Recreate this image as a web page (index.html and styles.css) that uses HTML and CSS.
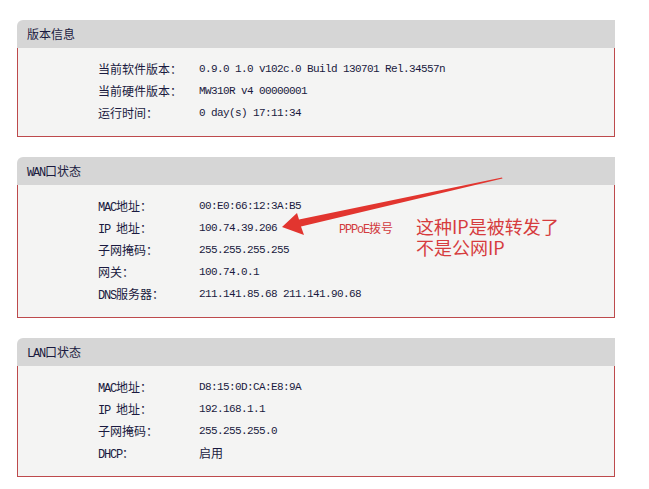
FILE: index.html
```html
<!DOCTYPE html>
<html lang="zh-CN">
<head>
    <meta charset="UTF-8">
    <title>运行状态</title>
    <link rel="stylesheet" href="styles.css">
</head>
<body>
    <div class="page">
        <div class="panel">
            <div class="panel-head">版本信息</div>
            <div class="panel-body">
                <div class="row"><span class="label">当前软件版本：</span><span class="val">0.9.0 1.0 v102c.0 Build 130701 Rel.34557n</span></div>
                <div class="row"><span class="label">当前硬件版本：</span><span class="val">MW310R v4 00000001</span></div>
                <div class="row"><span class="label">运行时间：</span><span class="val">0 day(s) 17:11:34</span></div>
            </div>
        </div>

        <div class="panel">
            <div class="panel-head"><span class="en">WAN</span>口状态</div>
            <div class="panel-body">
                <div class="row"><span class="label"><span class="en">MAC</span>地址：</span><span class="val">00:E0:66:12:3A:B5</span></div>
                <div class="row"><span class="label"><span class="en">IP </span> 地址：</span><span class="val">100.74.39.206</span></div>
                <div class="row"><span class="label">子网掩码：</span><span class="val">255.255.255.255</span></div>
                <div class="row"><span class="label">网关：</span><span class="val">100.74.0.1</span></div>
                <div class="row"><span class="label"><span class="en">DNS</span>服务器：</span><span class="val">211.141.85.68 211.141.90.68</span></div>
                <div class="tag"><span class="en">PPPoE</span>拨号</div>
                <div class="note">
                    <div>这种IP是被转发了</div>
                    <div>不是公网IP</div>
                </div>
            </div>
        </div>

        <div class="panel">
            <div class="panel-head"><span class="en">LAN</span>口状态</div>
            <div class="panel-body">
                <div class="row"><span class="label"><span class="en">MAC</span>地址：</span><span class="val">D8:15:0D:CA:E8:9A</span></div>
                <div class="row"><span class="label"><span class="en">IP </span> 地址：</span><span class="val">192.168.1.1</span></div>
                <div class="row"><span class="label">子网掩码：</span><span class="val">255.255.255.0</span></div>
                <div class="row"><span class="label"><span class="en">DHCP</span>：</span><span class="val cn">启用</span></div>
            </div>
        </div>

        <!-- annotation arrow drawn on top of the screenshot -->
        <svg class="arrow" width="649" height="489" viewBox="0 0 649 489">
            <polygon fill="#e2352f" points="282,227 297,213 299,219.6 502,177.6 502.5,178.4 301,226.6 304,235"/>
        </svg>
    </div>
</body>
</html>
```

FILE: styles.css
```css
body {
    margin: 0;
    background: #ffffff;
    font-family: "Noto Sans CJK SC", sans-serif;
    font-size: 12px;
    color: #1a1a40;
}

.page {
    position: relative;
    width: 598px;
    padding: 20px 0 0 17px;
    display: flex;
    flex-direction: column;
    gap: 20px;
}

.panel-head {
    height: 28px;
    line-height: 28px;
    padding-left: 10px;
    background: #d6d6d6;
    border-top-left-radius: 6px;
}

.panel-body {
    position: relative;
    background: #f4f4f3;
    border: 1px solid #bd4a4c;
    border-top: none;
    padding: 10px 0 12px 80px;
}

.row {
    display: grid;
    grid-template-columns: 101px auto;
    height: 22px;
    line-height: 22px;
}

.val {
    font-family: "Liberation Mono", monospace;
    font-size: 11px;
    letter-spacing: -0.6px;
}

.en {
    font-family: "Liberation Mono", monospace;
    font-size: 12px;
    letter-spacing: -1.2px;
}

.val.cn {
    font-family: "Noto Sans CJK SC", sans-serif;
    font-size: 12px;
    letter-spacing: 0;
}

.tag {
    position: absolute;
    left: 321px;
    top: 35px;
    line-height: 16px;
    color: #d23b3d;
}

.note {
    position: absolute;
    left: 398px;
    top: 31px;
    font-size: 18px;
    line-height: 21px;
    color: #d63c3e;
}

.arrow {
    position: absolute;
    left: 0;
    top: 0;
    pointer-events: none;
}
```
